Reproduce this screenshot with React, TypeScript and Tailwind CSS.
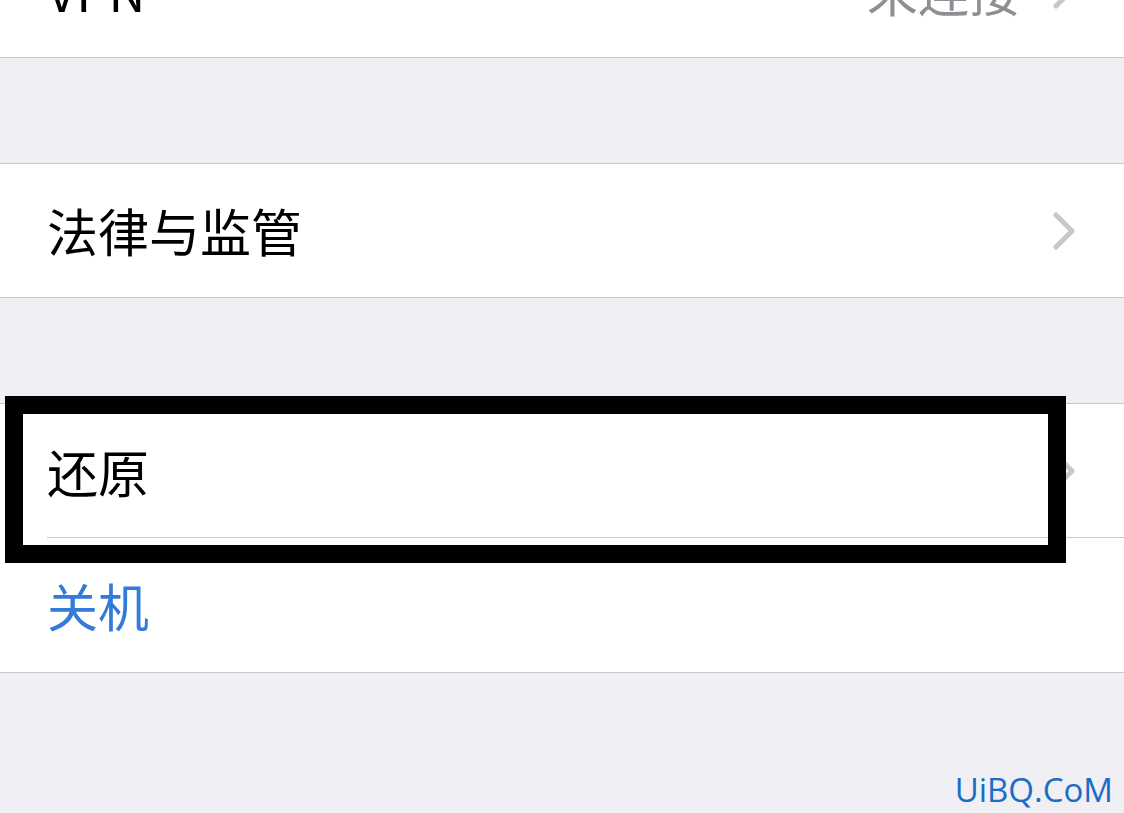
import React from "react";

type Row = {
  label: string;
  value?: string;
  chevron?: boolean;
  blue?: boolean;
};

function Chevron() {
  return (
    <svg width="24" height="38" viewBox="0 0 24 38" className="shrink-0">
      <path
        d="M4 3 L20 19 L4 35"
        fill="none"
        stroke="#c7c7cc"
        strokeWidth="5"
        strokeLinecap="round"
        strokeLinejoin="round"
      />
    </svg>
  );
}

function Cell({ row, inset, short }: { row: Row; inset?: boolean; short?: boolean }) {
  return (
    <div
      className={
        "relative flex items-center bg-white pl-[47px] pr-[48px] " +
        (short ? "h-[133px]" : "h-[134px]")
      }
    >
      <span
        className={
          "flex-1 text-[51px] leading-none " +
          (row.blue ? "text-[#347ad9]" : "text-black")
        }
      >
        {row.label}
      </span>
      {row.value && (
        <span className="mr-[32px] text-[51px] leading-none text-[#8e8e93]">
          {row.value}
        </span>
      )}
      {row.chevron && <Chevron />}
      {inset && (
        <div className="absolute bottom-0 left-[47px] right-0 h-px bg-[#c8c7cc]" />
      )}
    </div>
  );
}

function Group({ rows, short }: { rows: Row[]; short?: boolean }) {
  return (
    <div className="border-y border-[#c8c7cc]">
      {rows.map((r, i) => (
        <Cell key={r.label} row={r} short={short} inset={i < rows.length - 1} />
      ))}
    </div>
  );
}

export default function App() {
  return (
    <div
      className="relative h-[813px] w-[1124px] overflow-hidden bg-[#efeff4]"
      style={{ fontFamily: '"Noto Sans CJK SC", "Noto Sans", sans-serif' }}
    >
      <div className="-mt-[77px] flex flex-col gap-[105px]">
        <div className="border-b border-[#c8c7cc]">
          <Cell row={{ label: "VPN", value: "未连接", chevron: true }} />
        </div>
        <Group short rows={[{ label: "法律与监管", chevron: true }]} />
        <Group
          rows={[
            { label: "还原", chevron: true },
            { label: "关机", blue: true },
          ]}
        />
      </div>

      {/* highlight frame drawn over the reset row */}
      <div className="absolute left-[5px] top-[396px] h-[167px] w-[1061px] border-[18px] border-black" />

      <div
        className="absolute bottom-[7px] right-[11px] text-[33px] leading-none text-[#1a6cc8]"
        style={{ fontFamily: '"Open Sans", sans-serif' }}
      >
        UiBQ.CoM
      </div>
    </div>
  );
}
